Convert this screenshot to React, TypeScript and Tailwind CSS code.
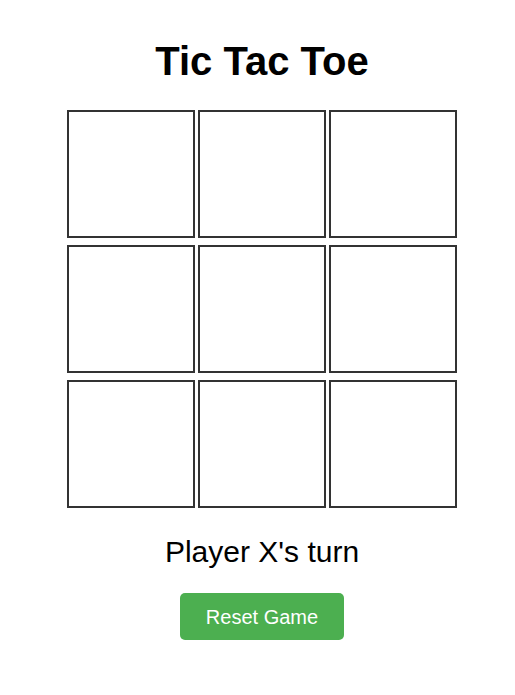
import { useState } from "react";

type Mark = "X" | "O" | null;

export default function App() {
  const [board, setBoard] = useState<Mark[]>(Array(9).fill(null));
  const [xTurn, setXTurn] = useState(true);

  const play = (i: number) => {
    if (board[i]) return;
    const next = board.slice();
    next[i] = xTurn ? "X" : "O";
    setBoard(next);
    setXTurn(!xTurn);
  };

  const reset = () => {
    setBoard(Array(9).fill(null));
    setXTurn(true);
  };

  return (
    <div className="min-h-[695px] bg-white pl-[9px] font-['Liberation_Sans',Arial,sans-serif] text-black">
      <div className="flex flex-col items-center">
        <h1 className="mt-[38px] text-[40px] leading-[46px] font-bold">Tic Tac Toe</h1>

        <div className="mt-[26px] grid grid-cols-[repeat(3,128px)] gap-x-[3px] gap-y-[7px]">
          {board.map((cell, i) => (
            <button
              key={i}
              onClick={() => play(i)}
              className="h-[128px] w-[128px] border-2 border-[#333] bg-white text-[48px] font-bold"
            >
              {cell}
            </button>
          ))}
        </div>

        <p className="mt-[27px] text-[30px] leading-[34px]">
          Player {xTurn ? "X" : "O"}'s turn
        </p>

        <button
          onClick={reset}
          className="mt-[24px] h-[47px] rounded-[5px] bg-[#4caf50] px-[26px] text-[20px] text-white"
        >
          Reset Game
        </button>
      </div>
    </div>
  );
}
